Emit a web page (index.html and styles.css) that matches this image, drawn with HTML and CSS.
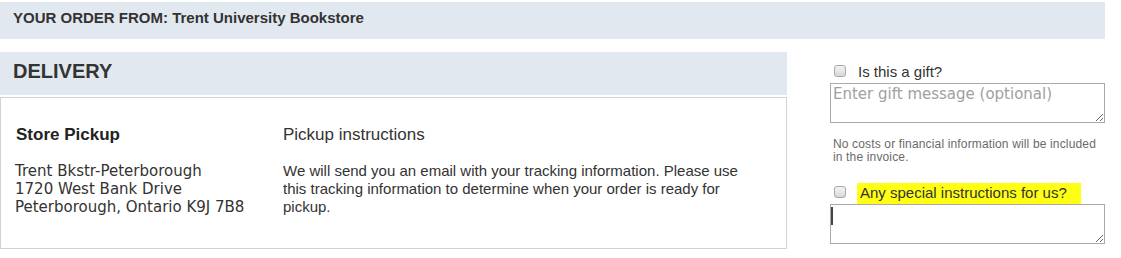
FILE: index.html
```html
<!DOCTYPE html>
<html>
<head>
<meta charset="utf-8">
<link rel="stylesheet" href="styles.css">
</head>
<body>
<div class="order-bar">YOUR ORDER FROM: Trent University Bookstore</div>
<div class="main">
  <div class="delivery">
    <div class="delivery-head">DELIVERY</div>
    <div class="delivery-box">
      <div class="pickup-col">
        <div class="pickup-title">Store Pickup</div>
        <div class="address">Trent Bkstr-Peterborough<br>1720 West Bank Drive<br>Peterborough, Ontario K9J 7B8</div>
      </div>
      <div class="instr-col">
        <div class="instr-title">Pickup instructions</div>
        <p class="instr-text">We will send you an email with your tracking information. Please use this tracking information to determine when your order is ready for pickup.</p>
      </div>
    </div>
  </div>
  <div class="side">
    <label class="check-row"><input type="checkbox" class="cb"><span>Is this a gift?</span></label>
    <textarea class="ta" placeholder="Enter gift message (optional)"></textarea>
    <p class="note">No costs or financial information will be included in the invoice.</p>
    <label class="check-row second"><input type="checkbox" class="cb"><span class="hl">Any special instructions for us?</span></label>
    <div class="ta-wrap">
      <textarea class="ta"></textarea>
      <span class="caret"></span>
    </div>
  </div>
</div>
</body>
</html>
```
FILE: styles.css
```css
html, body { margin: 0; padding: 0; background: #fff; }
body { font-family: "Liberation Sans", Arial, sans-serif; color: #333; width: 1121px; }

.order-bar {
  margin-top: 2px;
  width: 1105px;
  height: 37px;
  box-sizing: border-box;
  background: #e1e8f0;
  padding: 7px 0 0 13px;
  font-size: 15px;
  font-weight: bold;
  color: #333;
  line-height: 18px;
}

.main {
  display: flex;
  margin-top: 13px;
}

.delivery { width: 787px; }
.delivery-head {
  height: 43px;
  box-sizing: border-box;
  background: #e1e8f0;
  padding: 7px 0 0 13px;
  font-size: 20px;
  font-weight: bold;
  line-height: 24px;
  color: #333;
}
.delivery-box {
  margin-top: 2px;
  height: 152px;
  box-sizing: border-box;
  border: 1px solid #d2d2d2;
  display: flex;
  padding: 27px 0 0 15px;
}
.pickup-col { width: 267px; }
.pickup-title { font-size: 17px; font-weight: bold; line-height: 20px; color: #222; }
.address {
  margin-top: 17px;
  margin-left: -1px;
  font-family: "DejaVu Sans", Verdana, sans-serif;
  font-size: 15px;
  line-height: 18px;
  color: #333;
}
.instr-col { width: 470px; }
.instr-title { font-size: 17px; line-height: 20px; color: #333; }
.instr-text { margin: 17px 0 0; font-size: 15px; line-height: 18px; color: #333; }

.side {
  margin-left: 43px;
  width: 275px;
  padding-top: 10px;
}
.check-row {
  display: flex;
  align-items: flex-start;
  height: 20px;
  font-size: 15px;
  line-height: 20px;
  color: #333;
}
.cb {
  appearance: none;
  -webkit-appearance: none;
  flex: none;
  width: 12px;
  height: 12px;
  margin: 3px 12px 0 4px;
  border: 1px solid #a8a8a8;
  border-radius: 3px;
  background: linear-gradient(#f4f4f4, #d8d8d8);
  box-sizing: border-box;
}
.ta {
  display: block;
  width: 275px;
  height: 40px;
  box-sizing: border-box;
  margin: 1px 0 0;
  border: 1px solid #aaa;
  padding: 1px 2px;
  resize: vertical;
  font-family: "DejaVu Sans", Verdana, sans-serif;
  font-size: 15px;
  line-height: 18px;
}
.ta::placeholder { color: #a0a0a0; }
.note {
  margin: 15px 0 0 3px;
  font-size: 12px;
  letter-spacing: 0.15px;
  line-height: 13px;
  color: #6a6a6a;
}
.check-row.second { margin-top: 19px; }
.hl {
  background: #ffff14;
  line-height: 17px;
  padding: 1px 14px 5px 3px;
  margin-left: -1px;
  margin-top: 0;
}
.ta-wrap { position: relative; }
.caret {
  position: absolute;
  left: 1px;
  top: 3px;
  width: 2px;
  height: 18px;
  background: #444;
}
```
